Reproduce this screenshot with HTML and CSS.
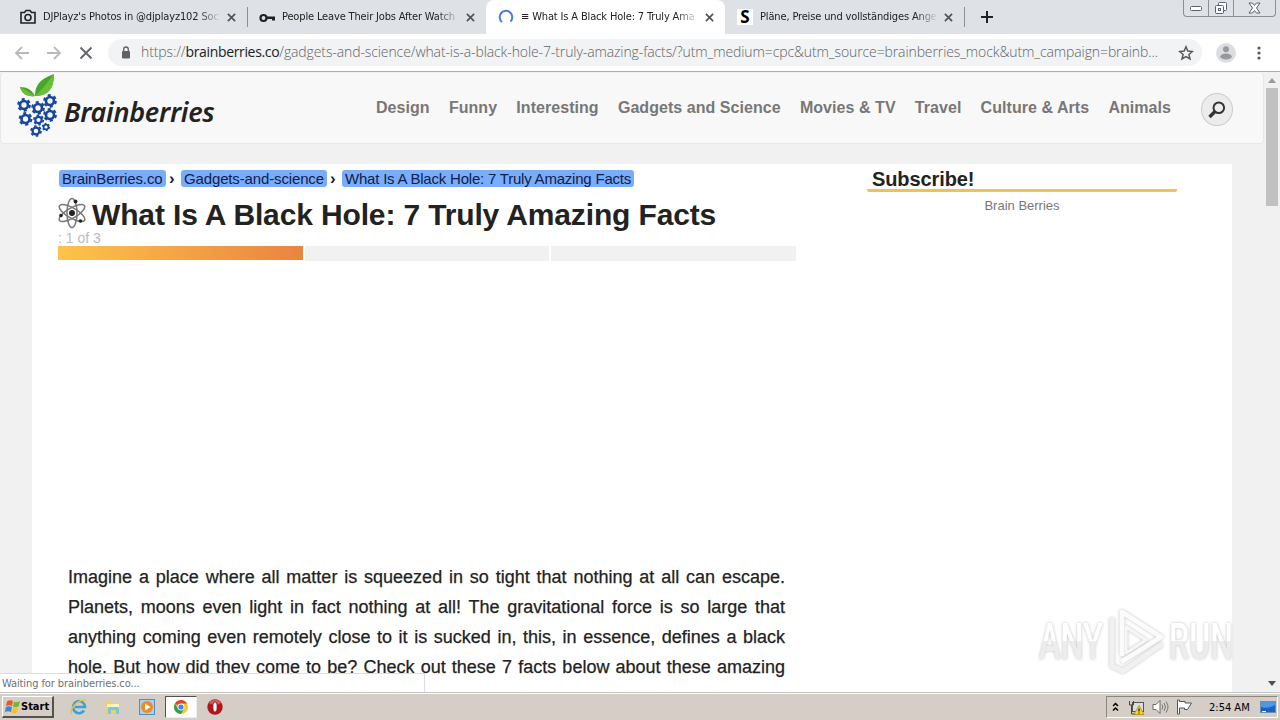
FILE: index.html
```
<!DOCTYPE html>
<html lang="en">
<head>
    <meta charset="UTF-8">
    <title>What Is A Black Hole: 7 Truly Amazing Facts</title>
    <link rel="stylesheet" href="styles.css">
</head>
<body>
    <div class="tabs">
        <div class="tab">
            <svg class="tab-icon" viewBox="0 0 16 16"><path d="M1 3.500h3.500L6 1.500h4l1.500 2H15v10.500H1z" fill="none" stroke="#202124" stroke-width="1.600"/><circle cx="8" cy="8.500" r="3" fill="none" stroke="#202124" stroke-width="1.600"/></svg>
            <span class="tab-title">DJPlayz's Photos in @djplayz102 Soc</span>
            <svg class="tab-close" viewBox="0 0 10 10"><path d="M1 1l8 8M9 1L1 9"/></svg>
        </div>
        <div class="tab divided">
            <svg class="tab-icon" viewBox="0 0 16 16"><circle cx="4.500" cy="9" r="3" fill="none" stroke="#202124" stroke-width="2.200"/><path d="M7 7.500h9v4h-3v-1.500H7z" fill="#202124"/></svg>
            <span class="tab-title">People Leave Their Jobs After Watch</span>
            <svg class="tab-close" viewBox="0 0 10 10"><path d="M1 1l8 8M9 1L1 9"/></svg>
        </div>
        <div class="tab active">
            <svg class="tab-icon" viewBox="0 0 16 16"><path d="M4 13A6.300 6.300 0 1 1 12.500 12.500" fill="none" stroke="#4a7bdc" stroke-width="2"/></svg>
            <span class="tab-title">≡ What Is A Black Hole: 7 Truly Ama</span>
            <svg class="tab-close" viewBox="0 0 10 10"><path d="M1 1l8 8M9 1L1 9"/></svg>
        </div>
        <div class="tab">
            <span class="tab-icon letter-icon">S</span>
            <span class="tab-title">Pläne, Preise und vollständiges Ange</span>
            <svg class="tab-close" viewBox="0 0 10 10"><path d="M1 1l8 8M9 1L1 9"/></svg>
        </div>
        <div class="new-tab divided">
            <svg width="12" height="12" viewBox="0 0 12 12"><path d="M6 0v12M0 6h12" stroke="#202124" stroke-width="2"/></svg>
        </div>
        <div class="window-buttons">
            <span><svg width="13" height="5" viewBox="0 0 13 5"><rect x=".5" y=".5" width="11" height="4" rx="1" fill="#fff" stroke="#596273"/></svg></span>
            <span><svg width="14" height="14" viewBox="0 0 14 14"><g fill="#fff" stroke="#596273"><rect x="4.500" y="1.500" width="8" height="8" rx="1"/><rect x="1.500" y="4.500" width="8" height="8" rx="1"/><rect x="4.500" y="7.500" width="2" height="2"/></g></svg></span>
            <span class="win-close"><svg width="13" height="12" viewBox="0 0 13 12"><path d="M1 1h3.500l2 2.500L8.500 1H12L8.500 6 12 11H8.500l-2-2.500-2 2.500H1l3.500-5z" fill="#fff" stroke="#596273"/></svg></span>
        </div>
    </div>

    <div class="toolbar">
        <svg class="nav-icon" viewBox="0 0 16 16"><path d="M15 8H2M8 2L2 8l6 6" stroke="#b8babd"/></svg>
        <svg class="nav-icon" viewBox="0 0 16 16"><path d="M1 8h13M8 2l6 6-6 6" stroke="#b8babd"/></svg>
        <svg class="nav-icon" viewBox="0 0 16 16"><path d="M2.500 2.500l11 11M13.500 2.500l-11 11" stroke="#5f6368"/></svg>
        <div class="address">
            <svg class="lock" viewBox="0 0 10 13"><rect x="1" y="5" width="8" height="7.500" rx="1" fill="#5f6368"/><path d="M2.700 5V3.300a2.300 2.300 0 0 1 4.600 0V5" fill="none" stroke="#5f6368" stroke-width="1.300"/></svg>
            <span class="url">https://<b>brainberries.co</b>/gadgets-and-science/what-is-a-black-hole-7-truly-amazing-facts/?utm_medium=cpc&amp;utm_source=brainberries_mock&amp;utm_campaign=brainb...</span>
            <svg class="star" viewBox="0 0 16 16"><path d="M8 1.800l1.800 4.300 4.600.4-3.500 3 1.100 4.500L8 11.600 4 14l1.100-4.500-3.500-3 4.600-.4z" fill="none" stroke="#55595e" stroke-width="1.500"/></svg>
        </div>
        <svg class="avatar" viewBox="0 0 20 20"><circle cx="10" cy="10" r="10" fill="#dcdde0"/><circle cx="10" cy="6.300" r="3" fill="#97999c"/><ellipse cx="10" cy="13.500" rx="5.800" ry="3" fill="#97999c"/></svg>
        <svg class="menu-dots" viewBox="0 0 4 14"><g fill="#55595e"><circle cx="2" cy="2" r="1.600"/><circle cx="2" cy="7" r="1.600"/><circle cx="2" cy="12" r="1.600"/></g></svg>
    </div>

    <div class="viewport">
        <div class="page">
            <header class="site-header">
                <svg class="logo" viewBox="0 0 42 64">
                    <defs>
                        <g id="gear" fill="none" stroke="#17479b">
                            <circle r="4" stroke-width="2.700"/>
                            <circle r="5.900" stroke-width="2" stroke-dasharray="3.090 3.090"/>
                        </g>
                    </defs>
                    <path d="M18 22C18 8 27 4 37 0c0 12-4 22-19 22z" fill="#46a52c"/>
                    <path d="M18 22C24 17 30 9 37 0c0 12-4 22-19 22z" fill="#6abf35"/>
                    <path d="M18 22C15 16 10 13 3 13c2 7 7 10 15 9z" fill="#46a52c"/>
                    <path d="M18 22C13 19 9 16 3 13c2 7 7 10 15 9z" fill="#6abf35"/>
                    <use href="#gear" transform="translate(7 31)"/>
                    <use href="#gear" transform="translate(21 34)"/>
                    <use href="#gear" transform="translate(33 27)"/>
                    <use href="#gear" transform="translate(8.500 45)"/>
                    <use href="#gear" transform="translate(33 41)"/>
                    <use href="#gear" transform="translate(21.500 46) scale(.8)"/>
                    <use href="#gear" transform="translate(29 53) scale(.6)"/>
                    <use href="#gear" transform="translate(19 57) scale(.85)"/>
                </svg>
                <span class="brand">Brainberries</span>
                <nav class="site-nav">
                    <a>Design</a>
                    <a>Funny</a>
                    <a>Interesting</a>
                    <a>Gadgets and Science</a>
                    <a>Movies &amp; TV</a>
                    <a>Travel</a>
                    <a>Culture &amp; Arts</a>
                    <a>Animals</a>
                </nav>
                <span class="search">
                    <svg width="18" height="18" viewBox="0 0 18 18"><circle cx="10.800" cy="6.800" r="5.300" fill="none" stroke="#333" stroke-width="2"/><path d="M7 10.500l-5.500 5.500" stroke="#333" stroke-width="3.400"/></svg>
                </span>
            </header>

            <div class="content">
                <main class="article">
                    <div class="breadcrumbs">
                        <a class="crumb-home">BrainBerries.co</a><i>›</i><a class="crumb-cat">Gadgets-and-science</a><i>›</i><a class="crumb-post">What Is A Black Hole: 7 Truly Amazing Facts</a>
                    </div>
                    <h1>
                        <svg class="atom" viewBox="0 0 28 32">
                            <g fill="none" stroke="#777" stroke-width="1.500">
                                <ellipse cx="14" cy="16" rx="5" ry="14.500"/>
                                <ellipse cx="14" cy="16" rx="5" ry="14.500" transform="rotate(60 14 16)"/>
                                <ellipse cx="14" cy="16" rx="5" ry="14.500" transform="rotate(120 14 16)"/>
                            </g>
                            <g fill="#222"><circle cx="14" cy="16" r="3"/><circle cx="17.500" cy="4.500" r="1.900"/><circle cx="3" cy="18.500" r="1.800"/><circle cx="22.500" cy="24" r="1.800"/></g>
                        </svg>
                        <span>What Is A Black Hole: 7 Truly Amazing Facts</span>
                    </h1>
                    <div class="page-count">: 1 of 3</div>
                    <div class="progress">
                        <span class="done"></span>
                        <span></span>
                        <span></span>
                    </div>
                    <p class="intro">Imagine a place where all matter is squeezed in so tight that nothing at all can escape.<br>Planets, moons even light in fact nothing at all! The gravitational force is so large that<br>anything coming even remotely close to it is sucked in, this, in essence, defines a black<br>hole. But how did they come to be? Check out these 7 facts below about these amazing</p>
                </main>
                <aside class="sidebar">
                    <h2>Subscribe!</h2>
                    <div class="fb-name">Brain Berries</div>
                </aside>
            </div>
        </div>
        <div class="scrollbar">
            <span class="arrow-up"></span>
            <span class="thumb"></span>
            <span class="arrow-down"></span>
        </div>
        <div class="status">Waiting for brainberries.co...</div>
    </div>

    <div class="taskbar">
        <div class="start">
            <svg width="16" height="15" viewBox="0 0 16 15"><path d="M2 2.500Q5 .5 8 2L7 7Q4 5.500 1 7z" fill="#e8582c"/><path d="M9 2.500q3 1.500 6-.5l-1.300 5.300q-3 1.700-5.700.2z" fill="#74b62e"/><path d="M1 8q3-1.500 6 0l-1 5Q3 11.500 0 13z" fill="#3c85d6"/><path d="M8 8.500q3 1.500 5.500 0L12 13.500q-3 1.500-5.200 0z" fill="#f7bf28"/></svg>
            <span>Start</span>
        </div>
        <div class="launch">
            <span><svg width="18" height="18" viewBox="0 0 18 18"><path d="M14 12.500A6 6 0 1 1 15 9H5" fill="none" stroke="#36a3de" stroke-width="2.600"/><path d="M2 16C-2 13 7 1 16 2" fill="none" stroke="#edc13b" stroke-width="1.500"/></svg></span>
            <span><svg width="16" height="16" viewBox="0 0 16 16"><path d="M1 2h5l1 2h7v10H1z" fill="#ecd06a"/><path d="M2 5h12v3H2z" fill="#fff3b8"/><path d="M3 15v-5q0-2 2-2h7q2 0 2 2v5h-3v-4H6v4z" fill="#7dc4df"/></svg></span>
            <span><svg width="16" height="16" viewBox="0 0 16 16"><rect x=".5" y=".5" width="15" height="15" fill="#a9d0ee" stroke="#4e8fc8"/><circle cx="8" cy="8" r="6" fill="#f28a1c"/><path d="M6 4.500v7L11.500 8z" fill="#fff"/></svg></span>
            <span class="current"><svg width="14" height="14" viewBox="0 0 14 14"><circle cx="7" cy="7" r="7" fill="#fbc62d"/><path d="M7 7L.95 3.500A7 7 0 0 1 13.060 3.500H7z" fill="#dd4335"/><path d="M.95 3.500A7 7 0 0 0 7 14l3-5.300-3 1.300-3-1.300z" fill="#2c9f55"/><circle cx="7" cy="7" r="3.400" fill="#fff"/><circle cx="7" cy="7" r="2.600" fill="#4384ed"/></svg></span>
            <span><svg width="16" height="16" viewBox="0 0 16 16"><circle cx="8" cy="8" r="7.700" fill="#b3151b"/><path d="M2 4a7 7 0 0 1 12 0q-6 4-12 0z" fill="#d85a55"/><ellipse cx="8" cy="8" rx="2.200" ry="5.200" fill="#fff" stroke="#8c1014"/></svg></span>
        </div>
        <div class="tray">
            <svg width="7" height="10" viewBox="0 0 7 10"><path d="M1 4l2.500-2.500L6 4M1 8.500L3.500 6 6 8.500" fill="none" stroke="#000" stroke-width="1.500"/></svg>
            <svg class="net" width="17" height="15" viewBox="0 0 17 15"><rect x="4.500" y="2.500" width="11" height="9" fill="#ddd" stroke="#555"/><path d="M1.500 1v4h4V1M3.500 5v9h4" fill="none" stroke="#444"/><path d="M11 5.500l5 9H6z" fill="#f7d32d" stroke="#a88300" stroke-width=".7"/><path d="M11 8.500v3M11 12.500v1" stroke="#222" stroke-width="1.300"/></svg>
            <svg class="sound" width="17" height="14" viewBox="0 0 17 14"><path d="M1 4.500h3l4-4v13l-4-4H1z" fill="#fff" stroke="#666"/><path d="M10 4.500q1.500 2.500 0 5M12 3q3 4 0 8M14 1.500q4 5.500 0 11" fill="none" stroke="#777"/></svg>
            <svg class="flag" width="17" height="16" viewBox="0 0 17 16"><path d="M1.500 1v14h2V9h5v1.500h3l4-6.500H9V2.500H3.500V1z" fill="#fff" stroke="#555"/></svg>
            <span class="clock">2:54 AM</span>
            <svg class="desktop" width="16" height="14" viewBox="0 0 16 14"><rect x=".5" y="1.500" width="15" height="11" fill="#1e63bb" stroke="#6e8fb5"/><path d="M1 2h14v3Q8 9 1 7z" fill="#4e97e3"/><path d="M2 11.500h4" stroke="#dff"/></svg>
        </div>
    </div>

    <svg class="watermark" width="204" height="70" viewBox="0 0 204 70">
        <defs>
            <linearGradient id="fade" x1="0" y1="0" x2="0" y2="1">
                <stop offset=".5" stop-color="#fff"/>
                <stop offset=".5" stop-color="#ededed"/>
            </linearGradient>
        </defs>
        <g font-family="Roboto, sans-serif" font-weight="500" font-size="50" fill="url(#fade)">
            <text transform="translate(5 53) scale(.68 1)" textLength="94" lengthAdjust="spacingAndGlyphs">ANY</text>
            <text transform="translate(135 53) scale(.68 1)" textLength="94" lengthAdjust="spacingAndGlyphs">RUN</text>
        </g>
        <g fill="none" stroke="#fbfbfb" stroke-width="5" stroke-linejoin="round">
            <path d="M88 50V6l39 25-40 25"/>
            <path d="M78 12v48l11 5 39-27" stroke="#f1f1f1"/>
            <path d="M92 21v26l20-13z" stroke="#f7f7f7" stroke-width="3"/>
        </g>
    </svg>
</body>
</html>
```

FILE: styles.css
```
* {
    box-sizing: border-box;
}
body {
    margin: 0;
    width: 1280px;
    height: 720px;
    overflow: hidden;
    display: flex;
    flex-direction: column;
    position: relative;
    font-family: "Liberation Sans", Arial, sans-serif;
    color: #222;
}
svg {
    display: block;
    flex: none;
}

/* browser tabs */
.tabs {
    height: 34px;
    flex: none;
    background: #dee1e6;
    display: flex;
    padding-left: 8px;
    font-family: "DejaVu Sans Condensed", "DejaVu Sans", sans-serif;
    font-stretch: condensed;
    font-size: 11px;
}
.tab {
    width: 239px;
    height: 34px;
    display: flex;
    align-items: center;
    padding-left: 12px;
}
.tab.active {
    background: #fff;
    border-radius: 8px 8px 0 0;
}
.divided {
    background: linear-gradient(#8c9096, #8c9096) left center / 1px 20px no-repeat;
}
.tab-icon {
    width: 16px;
    height: 16px;
    flex: none;
}
.letter-icon {
    background: #fff;
    color: #000;
    font: bold 17px/16px "Noto Sans", sans-serif;
    text-align: center;
}
.tab-title {
    width: 176px;
    margin: 0 8px 0 7px;
    white-space: nowrap;
    line-height: 18px;
    letter-spacing: -0.15px;
    -webkit-mask-image: linear-gradient(90deg, #000 155px, transparent 178px);
    mask-image: linear-gradient(90deg, #000 155px, transparent 178px);
}
.tab-close {
    width: 9px;
    height: 9px;
}
.tab-close path {
    stroke: #50545a;
    stroke-width: 1.9;
}
.new-tab {
    width: 46px;
    display: flex;
    align-items: center;
    justify-content: center;
}
.window-buttons {
    display: flex;
    margin-left: auto;
    margin-right: 4px;
    width: 93px;
    height: 17px;
    border: 1px solid #8a8f98;
    border-top: 0;
    border-radius: 0 0 4px 4px;
}
.window-buttons span {
    width: 25px;
    display: flex;
    align-items: center;
    justify-content: center;
    border-right: 1px solid #8a8f98;
}
.window-buttons .win-close {
    width: 41px;
    border-right: 0;
}

/* address bar */
.toolbar {
    height: 38px;
    flex: none;
    background: #fff;
    border-bottom: 1px solid #adb0ae;
    display: flex;
    align-items: center;
    padding-left: 14px;
}
.nav-icon {
    width: 16px;
    height: 16px;
    margin-right: 16px;
}
.nav-icon path {
    fill: none;
    stroke-width: 1.8;
}
.address {
    width: 1094px;
    height: 27px;
    margin-left: -2px;
    border-radius: 14px;
    background: #f1f3f4;
    display: flex;
    align-items: center;
    padding-left: 13px;
}
.lock {
    width: 10px;
    height: 13px;
}
.url {
    width: 1037px;
    margin-left: 10px;
    padding-bottom: 2px;
    white-space: nowrap;
    font: 300 14px/20px "Open Sans", "Noto Sans", sans-serif;
    letter-spacing: -0.105px;
    color: #5f6368;
}
.url b {
    font-weight: 400;
    letter-spacing: -0.35px;
    color: #202124;
}
.star {
    width: 16px;
    height: 16px;
}
.avatar {
    width: 20px;
    height: 20px;
    margin-left: 14px;
}
.menu-dots {
    width: 4px;
    height: 14px;
    margin-left: 21px;
}

/* page */
.viewport {
    height: 620px;
    flex: none;
    display: flex;
    position: relative;
    overflow: hidden;
    background: #f1f1f1;
}
.page {
    width: 1264px;
}
.site-header {
    height: 72px;
    background: #f8f8f8;
    border: 1px solid #e7e7e7;
    border-top-color: #f1f1f1;
    border-radius: 4px;
    display: flex;
    align-items: center;
    padding-left: 16px;
}
.logo {
    width: 42px;
    height: 64px;
    margin-top: -5px;
}
.brand {
    width: 152px;
    margin-left: 5px;
    margin-top: 7px;
    font: italic 600 27px/36px "Noto Sans", sans-serif;
    letter-spacing: -0.27px;
    white-space: nowrap;
}
.site-nav {
    display: flex;
    width: 795px;
    margin-left: 160px;
    justify-content: space-between;
    font-weight: bold;
    font-size: 16px;
    letter-spacing: 0.05px;
    color: #777;
    white-space: nowrap;
}
.search {
    width: 32px;
    height: 33px;
    margin-left: 30px;
    margin-top: 3px;
    border: 1px solid #ccc;
    border-radius: 50%;
    background: #ececec;
    display: flex;
    align-items: center;
    justify-content: center;
}
.content {
    width: 1200px;
    height: 560px;
    margin: 20px 0 0 32px;
    background: #fff;
    display: flex;
    padding-left: 26px;
}
.article {
    width: 738px;
    padding-top: 6px;
}
.breadcrumbs {
    display: flex;
    align-items: center;
    height: 17px;
    padding-left: 1px;
    font-size: 15px;
    letter-spacing: -0.14px;
    white-space: nowrap;
}
.breadcrumbs a {
    height: 17px;
    line-height: 18px;
    padding: 0 3px;
    background: #79adfa;
    border-radius: 3px;
    color: #10204a;
}
.breadcrumbs i {
    width: 15px;
    padding-left: 3px;
    font-style: normal;
    font-weight: bold;
    font-size: 17px;
    line-height: 15px;
}
.crumb-home {
    width: 107px;
}
.crumb-cat {
    width: 146px;
}
.breadcrumbs .crumb-post {
    width: 292px;
    letter-spacing: -0.21px;
}
h1 {
    display: flex;
    align-items: center;
    height: 44px;
    margin: 6px 0 0;
    font-size: 30px;
    line-height: 44px;
    letter-spacing: -0.14px;
    white-space: nowrap;
}
.atom {
    width: 28px;
    height: 32px;
    margin: -4px 6px 0 0;
}
.page-count {
    height: 14px;
    margin-top: -7px;
    line-height: 17px;
    font-size: 14px;
    color: #bbb;
}
.progress {
    display: flex;
    gap: 2px;
    margin-top: 2px;
}
.progress span {
    flex: 1;
    height: 15px;
    background: #f1f1f1;
}
.progress .done {
    height: 14px;
    background: linear-gradient(90deg, #fec34c, #ea8440);
}
.intro {
    width: 717px;
    margin: 301px 0 0 10px;
    font-size: 18px;
    line-height: 30px;
    text-align: justify;
    text-align-last: justify;
    white-space: nowrap;
    -webkit-text-stroke: 0.25px #222;
}
.sidebar {
    width: 310px;
    margin-left: 71px;
}
.sidebar h2 {
    margin: 0;
    height: 28px;
    padding-left: 5px;
    border-bottom: 3px solid #f4c04f;
    border-radius: 2px;
    font-size: 20px;
    line-height: 30px;
    letter-spacing: -0.1px;
}
.fb-name {
    margin-top: 6px;
    text-align: center;
    font-size: 13px;
    line-height: 15px;
    color: #777;
}
.scrollbar {
    width: 16px;
    display: flex;
    flex-direction: column;
    align-items: center;
}
.arrow-up,
.arrow-down {
    border: 4px solid transparent;
}
.arrow-up {
    border-bottom: 5px solid #999;
    border-top: 0;
    margin: 6px 0 5px;
}
.arrow-down {
    border-top: 5px solid #505050;
    border-bottom: 0;
    margin: auto 0 6px;
}
.thumb {
    width: 12px;
    height: 118px;
    background: #c1c1c1;
}
/* loading bubble sits over the page */
.status {
    position: absolute;
    left: 0;
    bottom: 0;
    width: 425px;
    height: 19px;
    padding-left: 2px;
    background: #fff;
    border-top: 1px solid #ddd;
    border-right: 1px solid #ddd;
    font: 11px/20px "DejaVu Sans Condensed", sans-serif;
    font-stretch: condensed;
    letter-spacing: -0.1px;
    color: #707070;
}

/* taskbar */
.taskbar {
    height: 28px;
    flex: none;
    border-top: 1px solid #c4c4c0;
    box-shadow: inset 0 1px #fff;
    background: #d5cec6;
    display: flex;
    align-items: center;
    padding: 1px 2px 0;
    font-family: "DejaVu Sans Condensed", sans-serif;
    font-stretch: condensed;
    font-size: 11px;
    color: #000;
}
.start {
    width: 52px;
    height: 22px;
    padding-left: 2px;
    display: flex;
    align-items: center;
    font-weight: bold;
    border: 1px solid #fff;
    border-right: 2px solid #55524e;
    border-bottom: 2px solid #55524e;
}
.launch {
    display: flex;
    margin-left: 9px;
}
.launch span {
    width: 32px;
    height: 22px;
    margin-right: 2px;
    display: flex;
    align-items: center;
    justify-content: center;
}
.launch .current {
    background: #fff;
    border: 1px solid #55524e;
    border-right-color: #eee;
    border-bottom-color: #eee;
}
.tray {
    width: 172px;
    height: 22px;
    margin-left: auto;
    padding-left: 5px;
    display: flex;
    align-items: center;
    border: 1px solid #8b8680;
    border-right-color: #fff;
    border-bottom-color: #fff;
}
.net {
    margin-left: 9px;
}
.sound {
    margin-left: 7px;
}
.flag {
    margin-left: 7px;
}
.clock {
    width: 44px;
    margin-left: 16px;
    white-space: nowrap;
}
.desktop {
    margin-left: 7px;
}

.watermark {
    position: absolute;
    left: 1034px;
    top: 606px;
    filter: drop-shadow(0 0 1.5px rgba(0, 0, 0, 0.25));
}
```
